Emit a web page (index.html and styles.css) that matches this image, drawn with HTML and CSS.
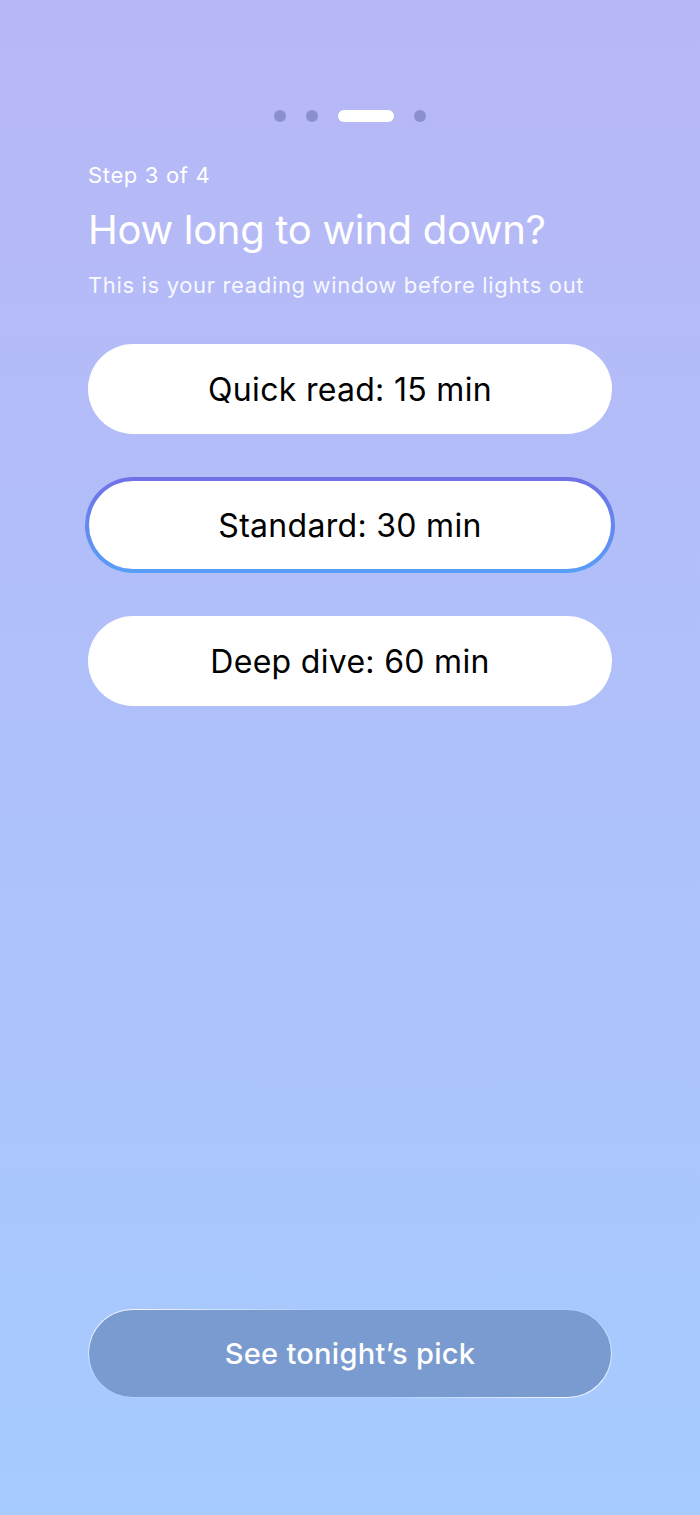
FILE: index.html
```html
<!DOCTYPE html>
<html lang="en">
<head>
  <meta charset="UTF-8" />
  <meta name="viewport" content="width=device-width, initial-scale=1" />
  <title>Wind down - Step 3</title>
  <link rel="stylesheet" href="styles.css">
</head>
<body>
  <main class="screen">
    <div class="progress">
      <span class="dot"></span>
      <span class="dot"></span>
      <span class="dot active"></span>
      <span class="dot"></span>
    </div>

    <p class="step">Step 3 of 4</p>
    <h1 class="title">How long to wind down?</h1>
    <p class="subtitle">This is your reading window before lights out</p>

    <div class="options">
      <button class="option">Quick read: 15 min</button>
      <button class="option selected">Standard: 30 min</button>
      <button class="option">Deep dive: 60 min</button>
    </div>

    <button class="cta">See tonight’s pick</button>
  </main>
</body>
</html>
```

FILE: styles.css
```css
body {
  margin: 0;
  font-family: Inter, "Noto Sans", sans-serif;
  background: linear-gradient(180deg, #b8b7f6 0%, #a6cbfe 100%);
  min-height: 1515px;
}
.screen {
  min-height: 1515px;
  box-sizing: border-box;
  padding: 110px 88px 117px;
  display: flex;
  flex-direction: column;
}
.progress {
  display: flex;
  justify-content: center;
  gap: 20px;
  margin-bottom: 40px;
}
.dot {
  width: 12px;
  height: 12px;
  border-radius: 6px;
  background: #8b8fcb;
}
.dot.active {
  width: 56px;
  background: #fff;
}
.step {
  margin: 0;
  color: #fff;
  font-size: 22px;
  line-height: 26px;
  letter-spacing: 0.65px;
}
.title {
  margin: 18px 0 0;
  color: #fff;
  font-size: 40px;
  font-weight: 400;
  line-height: 48px;
  letter-spacing: -0.3px;
}
.subtitle {
  margin: 18px 0 0;
  color: rgba(255,255,255,0.92);
  font-size: 22px;
  line-height: 26px;
  letter-spacing: 0.65px;
}
.options {
  display: flex;
  flex-direction: column;
  gap: 46px;
  margin-top: 46px;
}
.option {
  height: 90px;
  border: none;
  border-radius: 45px;
  background: #fff;
  color: #000;
  font-family: inherit;
  font-size: 32px;
  letter-spacing: 0.3px;
  cursor: pointer;
}
.selected {
  height: 96px;
  margin: -3px;
  border: 4px solid transparent;
  border-radius: 48px;
  background: linear-gradient(#fff, #fff) padding-box,
              linear-gradient(180deg, #7070e6, #589ff8) border-box;
}
.cta {
  margin-top: auto;
  height: 89px;
  border: 1.5px solid transparent;
  border-radius: 45px;
  background: linear-gradient(#7a9bcf, #7a9bcf) padding-box,
              linear-gradient(160deg, #fff 0%, rgba(255,255,255,0.1) 30%, rgba(255,255,255,0.1) 70%, #fff 100%) border-box;
  color: #fff;
  font-family: inherit;
  font-size: 29px;
  font-weight: 500;
  letter-spacing: 0.3px;
  cursor: pointer;
}
```
